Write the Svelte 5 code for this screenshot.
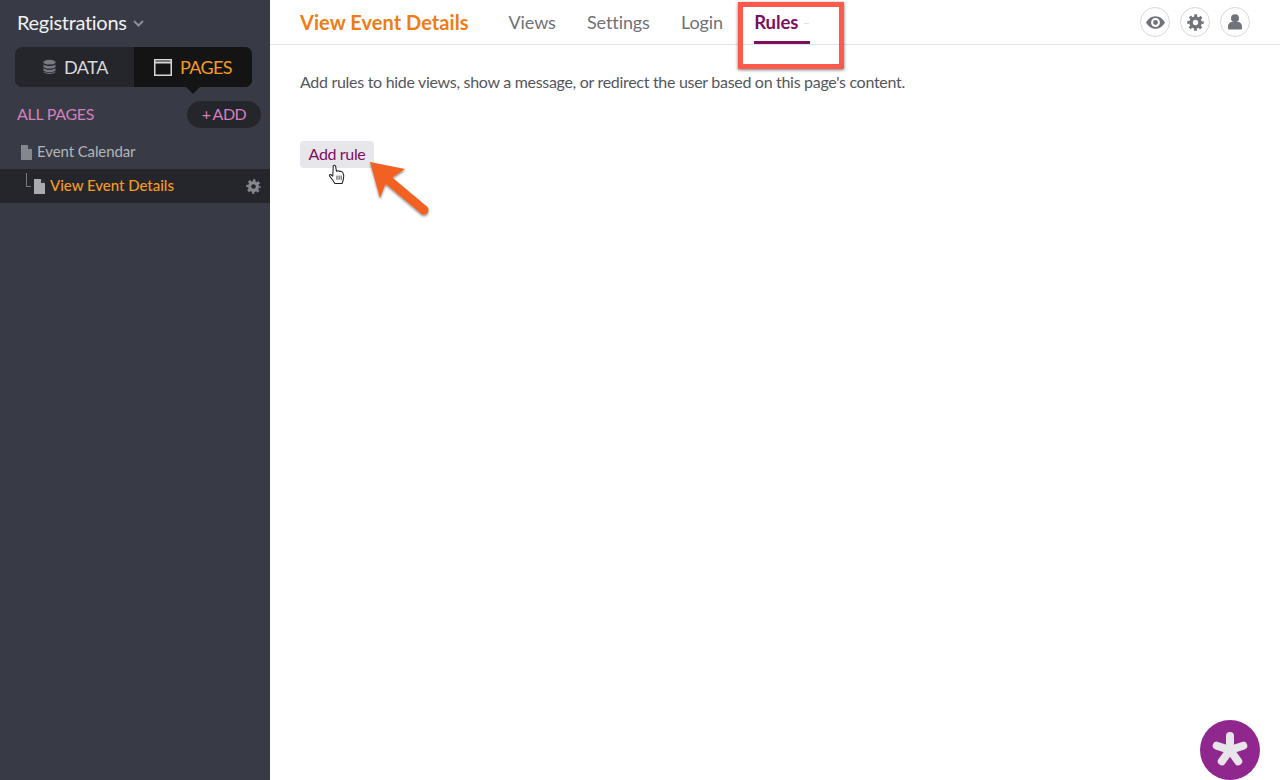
<script lang="ts">
	const tabs = ['Views', 'Settings', 'Login', 'Rules'];
	const activeTab = 'Rules';
	const doc = 'M0 0h6.500l4.500 4.500v10.500h-11zM7 .8v3.200h3.200z';
</script>

{#snippet cog(size, color)}
	<svg width={size} height={size} viewBox="0 0 18 18" fill="none" stroke={color}>
		<circle cx="9" cy="9" r="4.700" stroke-width="3.800" />
		<circle cx="9" cy="9" r="7.300" stroke-width="2.800" stroke-dasharray="3 2.730" stroke-dashoffset="1.500" />
	</svg>
{/snippet}

<div class="page">
	<aside class="sidebar">
		<div class="app-name">
			Registrations
			<svg class="chevron" width="11" height="7" viewBox="0 0 11 7"><path d="M1 1l4.500 4.500L10 1" fill="none" stroke="#8b8e96" stroke-width="2" /></svg>
		</div>

		<div class="switch">
			<div class="switch-item">
				<svg width="13" height="16" viewBox="0 0 14 16" fill="#777a83">
					<ellipse cx="7" cy="2.800" rx="6.500" ry="2.600" />
					<path d="M.5 5c1 2.600 12 2.600 13 0v2.600c-1 2.800-12 2.800-13 0z" />
					<path d="M.5 9c1 2.600 12 2.600 13 0v2.600c-1 2.800-12 2.800-13 0z" />
					<path d="M.5 12.600c1 2.400 12 2.400 13 0v.6c-1 3-12 3-13 0z" />
				</svg>
				DATA
			</div>
			<div class="switch-item current">
				<svg width="18" height="17" viewBox="0 0 18 17">
					<rect x="0.750" y="0.750" width="16.500" height="15.500" fill="none" stroke="#d8d8da" stroke-width="1.500" />
					<path d="M1 3.500h16" stroke="#d8d8da" stroke-width="2" />
				</svg>
				PAGES
			</div>
			<span class="notch"></span>
		</div>

		<div class="pages-head">
			<span class="pages-title">ALL PAGES</span>
			<button class="add-page">+ ADD</button>
		</div>

		<div class="page-row">
			<svg width="11" height="15" viewBox="0 0 11 15" fill="#85878e"><path d={doc} /></svg>
			Event Calendar
		</div>
		<div class="page-row selected">
			<span class="branch"></span>
			<svg width="11" height="15" viewBox="0 0 11 15" fill="#a9abb0"><path d={doc} /></svg>
			<span class="grow">View Event Details</span>
			{@render cog(15, '#85878e')}
		</div>
	</aside>

	<main class="main">
		<header class="topbar">
			<h1>View Event Details</h1>
			<nav class="tabs">
				{#each tabs as tab}
					<span class="tab" class:active={tab === activeTab}>{tab}</span>
				{/each}
			</nav>
			<div class="round-buttons">
				<span class="round">
					<svg width="19" height="13" viewBox="0 0 18 12"><path fill-rule="evenodd" fill="#71737a" d="M9 0c4 0 7 2.600 9 6-2 3.400-5 6-9 6s-7-2.600-9-6c2-3.400 5-6 9-6zM9 1.800a4.200 4.200 0 1 0 0 8.400 4.200 4.200 0 0 0 0-8.400z" /><circle cx="9" cy="6" r="2.300" fill="#71737a" /></svg>
				</span>
				<span class="round">{@render cog(17, '#71737a')}</span>
				<span class="round">
					<svg width="14" height="16" viewBox="0 0 14 16" fill="#71737a"><circle cx="7" cy="4.200" r="4" /><path d="M0 13c0-3.500 2-5 4-5h6c2 0 4 1.500 4 5v1.500q0 1-1 1h-12q-1 0-1-1z" /></svg>
				</span>
			</div>
		</header>

		<section class="content">
			<p>Add rules to hide views, show a message, or redirect the user based on this page's content.</p>
			<button class="add-rule">Add rule</button>
		</section>
	</main>

	<!-- screenshot annotations -->
	<div class="callout"></div>
	<svg class="cursor" width="17" height="21" viewBox="0 0 16 20">
		<path d="M4 1.500q1.500-1 2.200.5l.8 5 1.500-.5 1.500.5 1.500 0 1.500 1 1 3-.5 4-1 3.500h-7l-2-3-3-4q-.5-1.500 1-1.500l2 1.500z" fill="#fff" stroke="#222" stroke-width="1" stroke-linejoin="round" />
		<path d="M7.500 11v4M9.500 11v4M11.500 11v4" stroke="#222" stroke-width="0.800" />
	</svg>
	<svg class="arrow" width="70" height="66" viewBox="0 0 70 66">
		<defs>
			<filter id="arrow-shadow" x="-20%" y="-20%" width="140%" height="140%"><feDropShadow dx="0" dy="1.500" stdDeviation="1.200" flood-color="#000" flood-opacity="0.5" /></filter>
		</defs>
		<g filter="url(#arrow-shadow)" fill="#f26122">
			<path d="M2 2L37 9 25 17 17 25 12 38z" />
			<path d="M19 19L56 50" stroke="#f26122" stroke-width="9" stroke-linecap="round" />
		</g>
	</svg>
	<div class="chat">
		<svg width="36" height="36" viewBox="0 0 36 36">
			<g stroke="#e8e5ea" stroke-width="8" stroke-linecap="round">
				<path d="M18 18V4" />
				<path d="M18 18L31.300 13.700" />
				<path d="M18 18L26.200 29.300" />
				<path d="M18 18L9.800 29.300" />
				<path d="M18 18L4.700 13.700" />
			</g>
		</svg>
	</div>
</div>

<style>
	:global(body) {
		margin: 0;
		font-family: Lato, "Open Sans", sans-serif;
		background: #fff;
	}

	.page {
		position: relative;
		display: flex;
		height: 780px;
		width: 1280px;
		overflow: hidden;
	}

	.sidebar {
		width: 270px;
		flex-shrink: 0;
		background: #383b45;
		box-sizing: border-box;
		padding-top: 10px;
	}

	.app-name {
		display: flex;
		align-items: center;
		gap: 6px;
		padding-left: 17px;
		height: 24px;
		color: #f1f1f2;
		font-size: 20px;
		letter-spacing: -0.3px;
	}

	.chevron {
		margin-top: 3px;
	}

	.switch {
		position: relative;
		display: flex;
		margin: 13px 0 0 15px;
		width: 237px;
		height: 40px;
		border-radius: 7px;
		background: #25262b;
	}

	.switch-item {
		flex: 0 0 119px;
		display: flex;
		align-items: center;
		justify-content: center;
		gap: 8px;
		padding-left: 2px;
		box-sizing: border-box;
		font-size: 18px;
		color: #d9dadc;
		letter-spacing: -0.4px;
	}

	.switch-item.current {
		flex: 0 0 118px;
		padding-left: 0;
		background: #141415;
		border-radius: 0 7px 7px 0;
		color: #f49b23;
		letter-spacing: -0.6px;
	}

	.notch {
		position: absolute;
		left: 171px;
		bottom: -7px;
		border-left: 7px solid transparent;
		border-right: 7px solid transparent;
		border-top: 7px solid #141415;
	}

	.pages-head {
		display: flex;
		align-items: center;
		justify-content: space-between;
		margin-top: 14px;
		padding: 0 9px 0 17px;
		color: #d47fbd;
		font-size: 16px;
		line-height: 25px;
		letter-spacing: -0.3px;
	}

	.pages-title {
		padding-bottom: 2px;
	}

	.add-page {
		width: 74px;
		height: 27px;
		padding: 0 0 2px;
		border: 0;
		border-radius: 14px;
		background: #25262b;
		color: #d47fbd;
		font: inherit;
		letter-spacing: -0.5px;
		word-spacing: -1px;
	}

	.page-row {
		display: flex;
		align-items: center;
		gap: 5px;
		height: 34px;
		box-sizing: border-box;
		padding-left: 21px;
		padding-bottom: 2px;
		color: #b3b5b9;
		font-size: 15px;
		letter-spacing: -0.1px;
	}

	.pages-head + .page-row {
		margin-top: 7px;
	}

	.page-row.selected {
		position: relative;
		padding: 0 9px 2px 34px;
		background: #25262b;
		color: #f49b23;
		font-weight: 500;
		letter-spacing: -0.02px;
	}

	.page-row svg {
		margin-top: 2px;
	}

	.branch {
		position: absolute;
		left: 26px;
		top: 4px;
		width: 4px;
		height: 13px;
		border-left: 1px solid #777a83;
		border-bottom: 1px solid #777a83;
	}

	.grow {
		flex: 1;
	}

	.main {
		flex: 1;
		min-width: 0;
	}

	.topbar {
		display: flex;
		align-items: center;
		height: 44px;
		padding: 0 30px;
		border-bottom: 1px solid #e2e2e4;
	}

	h1 {
		margin: 0 40px 0 0;
		color: #f07c14;
		font-size: 20px;
		font-weight: 700;
		letter-spacing: 0.05px;
	}

	.tabs {
		display: flex;
		gap: 31.2px;
		flex: 1;
		height: 100%;
	}

	.tab {
		display: flex;
		align-items: center;
		color: #6f7178;
		font-size: 18px;
		letter-spacing: -0.1px;
	}

	.tab.active {
		color: #7d0f5e;
		font-weight: 700;
		height: 44px;
		width: 56px;
		box-sizing: border-box;
		position: relative;
		font-size: 18.5px;
	}

	.tab.active::before {
		content: '';
		position: absolute;
		left: 50px;
		top: 23px;
		width: 5px;
		height: 1px;
		background: #e2e2e4;
	}

	.tab.active::after {
		content: '';
		position: absolute;
		left: 0;
		right: 0;
		bottom: 0;
		height: 3px;
		background: #7d0f5e;
	}

	.round-buttons {
		display: flex;
		gap: 10px;
	}

	.round {
		display: flex;
		align-items: center;
		justify-content: center;
		width: 30px;
		height: 30px;
		box-sizing: border-box;
		border: 1px solid #d8d8da;
		border-radius: 50%;
	}

	.content {
		padding: 27px 30px;
	}

	.content p {
		margin: 0;
		color: #54565e;
		font-size: 16px;
		line-height: 20px;
		letter-spacing: -0.3px;
	}

	.add-rule {
		display: block;
		margin-top: 49px;
		width: 74px;
		height: 27px;
		padding: 0 0 2px;
		border: 0;
		border-radius: 4px;
		background: #e7e6eb;
		color: #7d0f5e;
		font: inherit;
		font-size: 16px;
		letter-spacing: -0.35px;
	}

	.callout {
		position: absolute;
		left: 738px;
		top: 2px;
		width: 106px;
		height: 67px;
		box-sizing: border-box;
		border: 5px solid #fc5a4d;
		box-shadow: 0 1px 3px rgba(0, 0, 0, 0.55);
	}

	.cursor {
		position: absolute;
		left: 329px;
		top: 164px;
	}

	.arrow {
		position: absolute;
		left: 368px;
		top: 160px;
	}

	.chat {
		position: absolute;
		left: 1200px;
		top: 720px;
		width: 60px;
		height: 60px;
		display: flex;
		align-items: center;
		justify-content: center;
		border-radius: 50%;
		background: #90278e;
	}
</style>
